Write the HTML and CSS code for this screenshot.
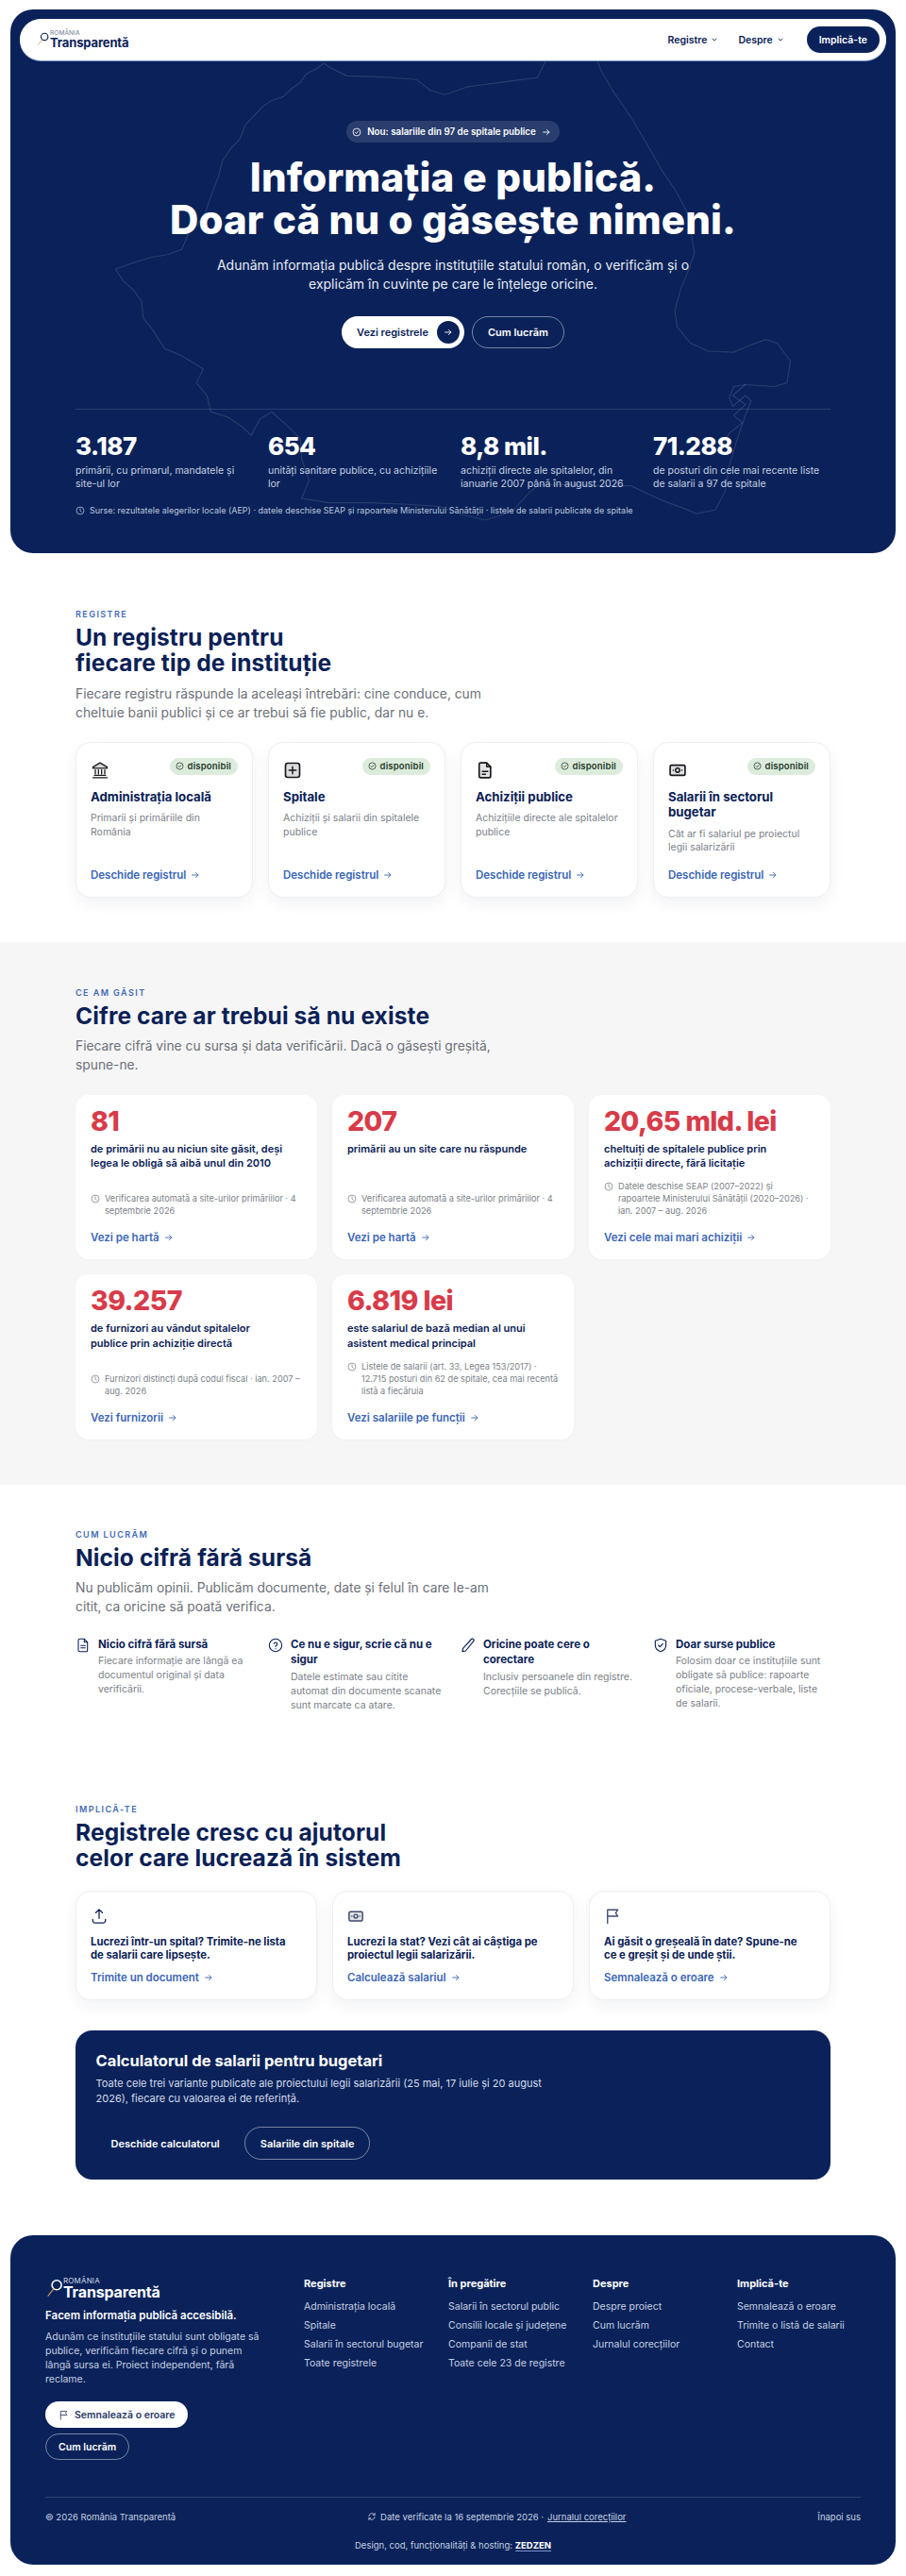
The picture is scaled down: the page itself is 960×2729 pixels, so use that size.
FILE: index.html
```html
<!DOCTYPE html>
<html lang="ro">
<head>
<meta charset="utf-8">
<title>România Transparentă</title>
<link rel="stylesheet" href="styles.css">
</head>
<body>
<svg class="defs" width="0" height="0" aria-hidden="true">
  <symbol id="i-check" viewBox="0 0 24 24"><circle cx="12" cy="12" r="9.5" fill="none" stroke="currentColor" stroke-width="2"/><path d="M8 12.5l2.8 2.8L16 9.5" fill="none" stroke="currentColor" stroke-width="2" stroke-linecap="round" stroke-linejoin="round"/></symbol>
  <symbol id="i-arrow" viewBox="0 0 24 24"><path d="M4 12h15M13 6l6 6-6 6" fill="none" stroke="currentColor" stroke-width="2.2" stroke-linecap="round" stroke-linejoin="round"/></symbol>
  <symbol id="i-chev" viewBox="0 0 24 24"><path d="M6 9l6 6 6-6" fill="none" stroke="currentColor" stroke-width="2.6" stroke-linecap="round" stroke-linejoin="round"/></symbol>
  <symbol id="i-clock" viewBox="0 0 24 24"><circle cx="12" cy="12" r="9.5" fill="none" stroke="currentColor" stroke-width="1.8"/><path d="M12 6.5V12l3 3.5" fill="none" stroke="currentColor" stroke-width="1.8" stroke-linecap="round" stroke-linejoin="round"/></symbol>
  <symbol id="i-bank" viewBox="0 0 24 24"><path d="M12 2.5L21 8v1.5H3V8z" fill="#d9d9dc" stroke="currentColor" stroke-width="1.6" stroke-linejoin="round"/><path d="M3 21.5h18M5 18.5h14M6 11.5v5M10 11.5v5M14 11.5v5M18 11.5v5" fill="none" stroke="currentColor" stroke-width="1.6" stroke-linecap="round"/></symbol>
  <symbol id="i-plus" viewBox="0 0 24 24"><rect x="3" y="3" width="18" height="18" rx="3" fill="#dcdcdf" stroke="currentColor" stroke-width="2"/><path d="M12 7.5v9M7.5 12h9" fill="none" stroke="currentColor" stroke-width="1.8" stroke-linecap="round"/></symbol>
  <symbol id="i-doc" viewBox="0 0 24 24"><path d="M6.5 2.5H14l5 5v12a2 2 0 0 1-2 2H6.500a2 2 0 0 1-2-2v-15a2 2 0 0 1 2-2z" fill="#e2e2e4" stroke="currentColor" stroke-width="2" stroke-linejoin="round"/><path d="M14 2.500v5h5M8.500 13.500h7M8.500 17h4" fill="none" stroke="currentColor" stroke-width="1.700" stroke-linecap="round" stroke-linejoin="round"/></symbol>
  <symbol id="i-cash" viewBox="0 0 24 24"><rect x="2.500" y="5.500" width="19" height="13" rx="2" fill="#e2e2e4" stroke="currentColor" stroke-width="2"/><circle cx="12" cy="12" r="2.600" fill="none" stroke="currentColor" stroke-width="1.800"/><path d="M6.500 12h.01M17.500 12h.01" stroke="currentColor" stroke-width="2" stroke-linecap="round"/></symbol>
  <symbol id="i-file" viewBox="0 0 24 24"><path d="M6.500 2H14l5 5v13a2 2 0 0 1-2 2H6.500a2 2 0 0 1-2-2V4a2 2 0 0 1 2-2z" fill="none" stroke="currentColor" stroke-width="1.600" stroke-linejoin="round"/><path d="M14 2v5h5M8.500 12.500h7M8.500 16h7" fill="none" stroke="currentColor" stroke-width="1.600" stroke-linecap="round" stroke-linejoin="round"/></symbol>
  <symbol id="i-help" viewBox="0 0 24 24"><circle cx="12" cy="12" r="10" fill="none" stroke="currentColor" stroke-width="1.600"/><path d="M9.300 9.300a2.800 2.800 0 0 1 5.400.8c0 1.900-2.700 2.300-2.700 4M12 17.500h.01" fill="none" stroke="currentColor" stroke-width="1.800" stroke-linecap="round" stroke-linejoin="round"/></symbol>
  <symbol id="i-pen" viewBox="0 0 24 24"><path d="M16.500 3a2.400 2.400 0 0 1 4.500 2.200L8 21l-5 1 .800-5z" fill="none" stroke="currentColor" stroke-width="1.700" stroke-linejoin="round"/></symbol>
  <symbol id="i-shield" viewBox="0 0 24 24"><path d="M12 2l8.500 3v7c0 5-3.700 8.400-8.500 10-4.800-1.600-8.500-5-8.500-10V5z" fill="none" stroke="currentColor" stroke-width="1.700" stroke-linejoin="round"/><path d="M8.500 12l2.500 2.500 4.500-5" fill="none" stroke="currentColor" stroke-width="1.700" stroke-linecap="round" stroke-linejoin="round"/></symbol>
  <symbol id="i-upload" viewBox="0 0 24 24"><path d="M12 15V2.500M7.500 7L12 2.500 16.500 7M3 16.500v1.500a3.500 3.500 0 0 0 3.500 3.500h11a3.500 3.500 0 0 0 3.500-3.500v-1.500" fill="none" stroke="currentColor" stroke-width="1.700" stroke-linecap="round" stroke-linejoin="round"/></symbol>
  <symbol id="i-flag" viewBox="0 0 24 24"><path d="M5 22V3h14.500l-3 4.500 3 4.500H5" fill="none" stroke="currentColor" stroke-width="1.800" stroke-linecap="round" stroke-linejoin="round"/></symbol>
  <symbol id="i-sync" viewBox="0 0 24 24"><path d="M4.500 11A7.800 7.800 0 0 1 18 6.500l1.500 1.500M19.500 13A7.800 7.800 0 0 1 6 17.500L4.500 16M19.500 3.500V8H15M4.500 20.500V16H9" fill="none" stroke="currentColor" stroke-width="2" stroke-linecap="round" stroke-linejoin="round"/></symbol>
  <symbol id="i-lens" viewBox="0 0 24 24"><circle cx="14" cy="8.500" r="6.300" fill="none" stroke="currentColor" stroke-width="2"/><path d="M10 13.500L2.500 23" fill="none" stroke="#d79a5e" stroke-width="1.400" stroke-linecap="round"/></symbol>
</svg>

<header class="hero">
  <svg class="hero-map" viewBox="0 0 1568 1568" preserveAspectRatio="none" aria-hidden="true">
    <path vector-effect="non-scaling-stroke" d="M560 175L548 190L530 205L520 228L505 245L490 268L470 278L455 295L440 320L425 345L415 385L400 410L385 445L378 490L368 530L355 590L340 625L325 650L315 690L290 705L262 712L235 725L200 745L212 775L232 805L245 835L248 880L265 915L285 965L315 985L352 1022L340 1060L358 1095L365 1140L395 1155L418 1180L435 1205L450 1160L470 1140L505 1190L520 1215L522 1270L535 1330L522 1380L570 1392L640 1392L705 1396L760 1402L800 1425L840 1440L870 1425L890 1410L915 1365L932 1342L985 1342L1040 1345L1092 1345L1125 1370L1150 1388L1180 1405L1205 1422L1238 1412L1255 1360L1262 1290L1275 1220L1290 1150L1300 1110L1290 1095L1268 1125L1262 1100L1270 1070L1290 1065L1340 1070L1362 1060L1368 1000L1345 950L1325 940L1295 958L1270 975L1225 972L1195 950L1172 905L1168 860L1178 800L1190 755L1202 700L1195 635L1190 590L1170 530L1145 470L1120 400L1090 320L1060 250L1040 195L1030 150L950 150L930 215L880 225L810 240L770 262L745 250L720 220L680 215L640 212L600 210L575 190Z"/>
    <path vector-effect="non-scaling-stroke" d="M1290 1065L1268 1095L1290 1120L1270 1150L1285 1170L1262 1200L1248 1240"/>
  </svg>
  <nav class="nav">
    <a class="logo">
      <svg class="logo-lens"><use href="#i-lens"/></svg>
      <span class="logo-text"><small>ROMÂNIA</small><b>Transparentă</b></span>
    </a>
    <div class="nav-links">
      <a>Registre <svg class="ic-7"><use href="#i-chev"/></svg></a>
      <a>Despre <svg class="ic-7"><use href="#i-chev"/></svg></a>
      <a class="nav-cta">Implică-te</a>
    </div>
  </nav>
  <div class="hero-inner">
    <a class="hero-pill"><svg class="ic-10"><use href="#i-check"/></svg>Nou: salariile din 97 de spitale publice<svg class="ic-10"><use href="#i-arrow"/></svg></a>
    <h1>Informația e publică.<br>Doar că nu o găsește nimeni.</h1>
    <p class="hero-lead">Adunăm informația publică despre instituțiile statului român, o verificăm și o explicăm în cuvinte pe care le înțelege oricine.</p>
    <div class="hero-btns">
      <a class="btn btn-white">Vezi registrele<span class="btn-dot"><svg class="ic-10"><use href="#i-arrow"/></svg></span></a>
      <a class="btn btn-ghost">Cum lucrăm</a>
    </div>
    <div class="stats">
      <div class="stat"><strong>3.187</strong><span>primării, cu primarul, mandatele și site-ul lor</span></div>
      <div class="stat"><strong>654</strong><span>unități sanitare publice, cu achizițiile lor</span></div>
      <div class="stat"><strong>8,8 mil.</strong><span>achiziții directe ale spitalelor, din ianuarie 2007 până în august 2026</span></div>
      <div class="stat"><strong>71.288</strong><span>de posturi din cele mai recente liste de salarii a 97 de spitale</span></div>
    </div>
    <p class="hero-src"><svg class="ic-10"><use href="#i-clock"/></svg>Surse: rezultatele alegerilor locale (AEP) · datele deschise SEAP și rapoartele Ministerului Sănătății · listele de salarii publicate de spitale</p>
  </div>
</header>

<main>
  <section class="sec sec-reg">
    <p class="eyebrow">REGISTRE</p>
    <h2>Un registru pentru<br>fiecare tip de instituție</h2>
    <p class="lead">Fiecare registru răspunde la aceleași întrebări: cine conduce, cum cheltuie banii publici și ce ar trebui să fie public, dar nu e.</p>
    <div class="grid-4">
      <article class="reg-card">
        <div class="reg-top"><svg class="ic-20"><use href="#i-bank"/></svg><span class="badge"><svg class="ic-9"><use href="#i-check"/></svg>disponibil</span></div>
        <h3>Administrația locală</h3>
        <p>Primarii și primăriile din România</p>
        <a class="link">Deschide registrul <svg class="ic-10"><use href="#i-arrow"/></svg></a>
      </article>
      <article class="reg-card">
        <div class="reg-top"><svg class="ic-20"><use href="#i-plus"/></svg><span class="badge"><svg class="ic-9"><use href="#i-check"/></svg>disponibil</span></div>
        <h3>Spitale</h3>
        <p>Achiziții și salarii din spitalele publice</p>
        <a class="link">Deschide registrul <svg class="ic-10"><use href="#i-arrow"/></svg></a>
      </article>
      <article class="reg-card">
        <div class="reg-top"><svg class="ic-20"><use href="#i-doc"/></svg><span class="badge"><svg class="ic-9"><use href="#i-check"/></svg>disponibil</span></div>
        <h3>Achiziții publice</h3>
        <p>Achizițiile directe ale spitalelor publice</p>
        <a class="link">Deschide registrul <svg class="ic-10"><use href="#i-arrow"/></svg></a>
      </article>
      <article class="reg-card">
        <div class="reg-top"><svg class="ic-20"><use href="#i-cash"/></svg><span class="badge"><svg class="ic-9"><use href="#i-check"/></svg>disponibil</span></div>
        <h3>Salarii în sectorul bugetar</h3>
        <p>Cât ar fi salariul pe proiectul legii salarizării</p>
        <a class="link">Deschide registrul <svg class="ic-10"><use href="#i-arrow"/></svg></a>
      </article>
    </div>
  </section>

  <section class="sec sec-gray">
    <p class="eyebrow">CE AM GĂSIT</p>
    <h2>Cifre care ar trebui să nu existe</h2>
    <p class="lead">Fiecare cifră vine cu sursa și data verificării. Dacă o găsești greșită, spune-ne.</p>
    <div class="grid-3 fact-grid">
      <article class="fact">
        <strong>81</strong>
        <h3>de primării nu au niciun site găsit, deși legea le obligă să aibă unul din 2010</h3>
        <p class="src"><svg class="ic-10"><use href="#i-clock"/></svg><span>Verificarea automată a site-urilor primăriilor · 4 septembrie 2026</span></p>
        <a class="link">Vezi pe hartă <svg class="ic-10"><use href="#i-arrow"/></svg></a>
      </article>
      <article class="fact">
        <strong>207</strong>
        <h3>primării au un site care nu răspunde</h3>
        <p class="src"><svg class="ic-10"><use href="#i-clock"/></svg><span>Verificarea automată a site-urilor primăriilor · 4 septembrie 2026</span></p>
        <a class="link">Vezi pe hartă <svg class="ic-10"><use href="#i-arrow"/></svg></a>
      </article>
      <article class="fact">
        <strong>20,65 mld. lei</strong>
        <h3>cheltuiți de spitalele publice prin<br>achiziții directe, fără licitație</h3>
        <p class="src"><svg class="ic-10"><use href="#i-clock"/></svg><span>Datele deschise SEAP (2007–2022) și rapoartele Ministerului Sănătății (2020–2026) · ian. 2007 – aug. 2026</span></p>
        <a class="link">Vezi cele mai mari achiziții <svg class="ic-10"><use href="#i-arrow"/></svg></a>
      </article>
      <article class="fact">
        <strong>39.257</strong>
        <h3>de furnizori au vândut spitalelor<br>publice prin achiziție directă</h3>
        <p class="src"><svg class="ic-10"><use href="#i-clock"/></svg><span>Furnizori distincți după codul fiscal · ian. 2007 – aug. 2026</span></p>
        <a class="link">Vezi furnizorii <svg class="ic-10"><use href="#i-arrow"/></svg></a>
      </article>
      <article class="fact">
        <strong>6.819 lei</strong>
        <h3>este salariul de bază median al unui asistent medical principal</h3>
        <p class="src"><svg class="ic-10"><use href="#i-clock"/></svg><span>Listele de salarii (art. 33, Legea 153/2017) · 12.715 posturi din 62 de spitale, cea mai recentă listă a fiecăruia</span></p>
        <a class="link">Vezi salariile pe funcții <svg class="ic-10"><use href="#i-arrow"/></svg></a>
      </article>
    </div>
  </section>

  <section class="sec sec-how">
    <p class="eyebrow">CUM LUCRĂM</p>
    <h2>Nicio cifră fără sursă</h2>
    <p class="lead">Nu publicăm opinii. Publicăm documente, date și felul în care le-am citit, ca oricine să poată verifica.</p>
    <div class="grid-4">
      <div class="how"><svg class="ic-16"><use href="#i-file"/></svg><div><h3>Nicio cifră fără sursă</h3><p>Fiecare informație are lângă ea documentul original și data verificării.</p></div></div>
      <div class="how"><svg class="ic-16"><use href="#i-help"/></svg><div><h3>Ce nu e sigur, scrie că nu e sigur</h3><p>Datele estimate sau citite automat din documente scanate sunt marcate ca atare.</p></div></div>
      <div class="how"><svg class="ic-16"><use href="#i-pen"/></svg><div><h3>Oricine poate cere o corectare</h3><p>Inclusiv persoanele din registre. Corecțiile se publică.</p></div></div>
      <div class="how"><svg class="ic-16"><use href="#i-shield"/></svg><div><h3>Doar surse publice</h3><p>Folosim doar ce instituțiile sunt obligate să publice: rapoarte oficiale, procese-verbale, liste de salarii.</p></div></div>
    </div>
  </section>

  <section class="sec sec-join">
    <p class="eyebrow">IMPLICĂ-TE</p>
    <h2>Registrele cresc cu ajutorul<br>celor care lucrează în sistem</h2>
    <div class="grid-3 join-grid">
      <article class="join"><svg class="ic-18"><use href="#i-upload"/></svg><h3>Lucrezi într-un spital? Trimite-ne lista<br>de salarii care lipsește.</h3><a class="link">Trimite un document <svg class="ic-10"><use href="#i-arrow"/></svg></a></article>
      <article class="join"><svg class="ic-18 muted"><use href="#i-cash"/></svg><h3>Lucrezi la stat? Vezi cât ai câștiga pe<br>proiectul legii salarizării.</h3><a class="link">Calculează salariul <svg class="ic-10"><use href="#i-arrow"/></svg></a></article>
      <article class="join"><svg class="ic-18 muted"><use href="#i-flag"/></svg><h3>Ai găsit o greșeală în date? Spune-ne<br>ce e greșit și de unde știi.</h3><a class="link">Semnalează o eroare <svg class="ic-10"><use href="#i-arrow"/></svg></a></article>
    </div>
    <div class="calc">
      <h3>Calculatorul de salarii pentru bugetari</h3>
      <p>Toate cele trei variante publicate ale proiectului legii salarizării (25 mai, 17 iulie și 20 august 2026), fiecare cu valoarea ei de referință.</p>
      <div class="calc-btns">
        <a class="btn btn-plain">Deschide calculatorul</a>
        <a class="btn btn-ghost">Salariile din spitale</a>
      </div>
    </div>
  </section>
</main>

<footer class="footer">
  <div class="foot-grid">
    <div class="foot-brand">
      <a class="logo logo-lg">
        <svg class="logo-lens"><use href="#i-lens"/></svg>
        <span class="logo-text"><small>ROMÂNIA</small><b>Transparentă</b></span>
      </a>
      <p class="foot-tag">Facem informația publică accesibilă.</p>
      <p class="foot-text">Adunăm ce instituțiile statului sunt obligate să publice, verificăm fiecare cifră și o punem lângă sursa ei. Proiect independent, fără reclame.</p>
      <div class="foot-btns">
        <a class="btn btn-white btn-sm"><svg class="ic-11"><use href="#i-flag"/></svg>Semnalează o eroare</a>
        <a class="btn btn-ghost btn-sm">Cum lucrăm</a>
      </div>
    </div>
    <div class="foot-col"><h4>Registre</h4><a>Administrația locală</a><a>Spitale</a><a>Salarii în sectorul bugetar</a><a>Toate registrele</a></div>
    <div class="foot-col"><h4>În pregătire</h4><a>Salarii în sectorul public</a><a>Consilii locale și județene</a><a>Companii de stat</a><a>Toate cele 23 de registre</a></div>
    <div class="foot-col"><h4>Despre</h4><a>Despre proiect</a><a>Cum lucrăm</a><a>Jurnalul corecțiilor</a></div>
    <div class="foot-col"><h4>Implică-te</h4><a>Semnalează o eroare</a><a>Trimite o listă de salarii</a><a>Contact</a></div>
  </div>
  <div class="foot-bottom">
    <span>© 2026 România Transparentă</span>
    <span class="foot-ver"><svg class="ic-10"><use href="#i-sync"/></svg>Date verificate la 16 septembrie 2026 · <u>Jurnalul corecțiilor</u></span>
    <span>Înapoi sus</span>
  </div>
  <p class="foot-credit">Design, cod, funcționalități &amp; hosting: <b>ZEDZEN</b></p>
</footer>
</body>
</html>
```

FILE: styles.css
```css
* { box-sizing: border-box; }
html, body { margin: 0; padding: 0; }
body { font-family: Inter, "Noto Sans", sans-serif; background: #fff; color: #0a2156; }
h1, h2, h3, h4, p { margin: 0; }
a { color: inherit; text-decoration: none; }
svg { display: block; flex: none; }
.defs { position: absolute; }
.ic-7 { width: 8px; height: 8px; }
.ic-9 { width: 9px; height: 9px; }
.ic-10 { width: 10px; height: 10px; }
.ic-11 { width: 11px; height: 11px; }
.ic-16 { width: 16px; height: 18px; color: #0a2156; }
.ic-18 { width: 18px; height: 20px; color: #0a2156; }
.ic-20 { width: 20px; height: 20px; color: #16181d; }
.muted { color: #3c4a70; }

/* hero */
.hero { position: relative; margin: 10px 11px 0; height: 576px; background: #0a2259; border-radius: 24px; overflow: hidden; }
.hero-map { position: absolute; left: -11px; top: -10px; width: 960px; height: 600px; fill: none; stroke: rgba(255,255,255,.13); stroke-width: 1.1; }
.nav { position: relative; display: flex; justify-content: space-between; align-items: center; height: 44px; margin: 10px 10px 0 10px; padding: 0 7px 0 18px; background: #fff; border-radius: 22px; box-shadow: 0 1px 0 #7f9ad0; }
.logo { display: flex; align-items: flex-start; color: #0a2156; }
.logo-lens { width: 14px; height: 14px; margin-top: 2px; }
.logo-text { display: flex; flex-direction: column; }
.logo-text small { font-size: 6.5px; line-height: 7px; color: #6b7894; letter-spacing: .02em; }
.logo-text b { font-size: 13px; line-height: 13px; font-weight: 700; letter-spacing: -.01em; }
.nav-links { display: flex; align-items: center; gap: 21px; font-size: 10.500px; font-weight: 600; color: #0a2156; }
.nav-links a { display: flex; align-items: center; gap: 4px; }
.nav-cta { height: 28px; padding: 0 13px; margin-left: 3px; border-radius: 14px; background: #0a2259; color: #fff; }

.hero-inner { position: relative; padding: 64px 69px 0; display: flex; flex-direction: column; align-items: center; color: #fff; }
.hero-pill { display: flex; align-items: center; gap: 6px; height: 23px; padding: 0 9px 0 6px; border-radius: 12px; background: rgba(255,255,255,.13); font-size: 9.800px; font-weight: 600; }
h1 { margin-top: 13.500px; font-size: 42px; line-height: 45px; font-weight: 800; letter-spacing: .003em; text-align: center; }
.hero-lead { margin-top: 16px; width: 520px; font-size: 14px; line-height: 20.500px; text-align: center; color: #e8ecf5; }
.hero-btns { display: flex; gap: 8px; margin-top: 23px; }
.btn { display: inline-flex; align-items: center; height: 34.500px; padding: 0 16px; border-radius: 18px; font-size: 11px; font-weight: 600; }
.btn-white { background: #fff; color: #0a2156; gap: 9px; padding-right: 5px; }
.btn-ghost { border: 1px solid rgba(255,255,255,.45); color: #fff; }
.btn-plain { color: #fff; }
.btn-dot { display: flex; align-items: center; justify-content: center; width: 24px; height: 24px; border-radius: 50%; background: #0a2259; color: #fff; }
.stats { align-self: stretch; display: grid; grid-template-columns: repeat(4, 1fr); gap: 16px; margin-top: 64px; padding-top: 25px; border-top: 1px solid rgba(255,255,255,.13); }
.stat strong { display: block; font-size: 26px; line-height: 28px; font-weight: 800; letter-spacing: -.02em; }
.stat span { display: block; margin-top: 5px; font-size: 10.500px; line-height: 14px; color: #c7d0e2; }
.hero-src { align-self: stretch; display: flex; align-items: center; gap: 5px; margin-top: 15px; font-size: 9px; line-height: 12px; color: #bcc6db; }

/* sections */
.sec { padding: 48px 80px; }
.sec-reg { padding-top: 59px; padding-bottom: 47px; }
.sec-gray { background: #f6f6f7; padding-bottom: 48px; }
.sec-how { padding-top: 47px; padding-bottom: 48px; }
.sec-join { padding-top: 49px; padding-bottom: 0; }
.eyebrow { font-size: 9px; line-height: 12px; font-weight: 600; letter-spacing: .16em; color: #3f69b5; }
h2 { margin-top: 5px; font-size: 24.500px; line-height: 27px; font-weight: 700; letter-spacing: .005em; color: #0a2156; }
.lead { margin-top: 8.500px; max-width: 448px; font-size: 13.800px; line-height: 20px; color: #6c7078; }
.grid-4 { display: grid; grid-template-columns: repeat(4, 1fr); gap: 16px; margin-top: 21.500px; }
.grid-3 { display: grid; grid-template-columns: repeat(3, 1fr); gap: 16px; margin-top: 21.500px; }

.link { display: flex; align-items: center; gap: 5px; font-size: 11.500px; line-height: 14px; font-weight: 600; color: #3b66b6; }

/* registry cards */
.reg-card { display: flex; flex-direction: column; min-height: 164.500px; padding: 15.500px 15px 16px; background: #fff; border: 1px solid #eeeff1; border-radius: 16px; box-shadow: 0 6px 16px rgba(10,33,86,.06); }
.reg-top { display: flex; justify-content: space-between; align-items: flex-start; height: 33px; }
.reg-top .ic-20 { margin-top: 3px; }
.badge { display: inline-flex; align-items: center; gap: 4px; height: 18px; padding: 0 7px 0 6px; border-radius: 9px; background: #dcebdc; font-size: 9.500px; font-weight: 600; letter-spacing: .02em; color: #1f3a2a; }
.reg-card h3 { font-size: 13.200px; line-height: 16.500px; font-weight: 700; color: #0a2156; }
.reg-card p { margin-top: 8px; font-size: 10.500px; line-height: 14.700px; color: #7a7f88; }
.reg-card .link { margin-top: auto; padding-top: 12px; }

/* facts */
.fact-grid { grid-auto-rows: 174.500px; }
.fact { display: flex; flex-direction: column; padding: 16px; background: #fff; border-radius: 14px; box-shadow: 0 1px 3px rgba(10,33,86,.03); }
.fact strong { font-size: 28.500px; line-height: 24px; font-weight: 800; letter-spacing: -.02em; color: #d83b49; }
.fact h3 { margin-top: 10px; font-size: 11px; line-height: 15.500px; font-weight: 600; color: #0a2156; }
.src { display: flex; gap: 5px; margin-top: auto; font-size: 9.200px; line-height: 13px; color: #7a7f88; }
.src svg { margin-top: 2px; }
.fact .link { margin-top: 15px; }

/* how */
.how { display: flex; gap: 8px; padding-right: 4px; }
.how h3 { font-size: 11.500px; line-height: 16.600px; font-weight: 700; color: #0a2156; }
.how p { margin-top: 2px; font-size: 10.500px; line-height: 15px; color: #7a7f88; }

/* join */
.join-grid { margin-top: 21px; }
.join { display: flex; flex-direction: column; height: 116px; padding: 16px 15px; background: #fff; border: 1px solid #eeeff1; border-radius: 16px; box-shadow: 0 6px 16px rgba(10,33,86,.06); }
.join h3 { margin-top: 10px; font-size: 11.300px; line-height: 14px; font-weight: 700; color: #0a2156; }
.join .link { margin-top: 10px; }
.calc { margin-top: 32px; height: 158.600px; padding: 22.700px 21.600px 0; background: #0a2259; border-radius: 18px; color: #fff; }
.calc h3 { font-size: 16.500px; line-height: 20px; font-weight: 700; }
.calc p { margin-top: 6px; max-width: 485px; font-size: 11px; line-height: 16px; color: #d7dded; }
.calc-btns { display: flex; gap: 0; margin-top: 22px; }
.calc-btns .btn-plain { margin-right: 10px; }

/* footer */
.footer { margin: 59px 11px 11px; height: 349px; padding: 44px 37px 0; background: #0a2259; border-radius: 24px; color: #fff; }
.foot-grid { display: grid; grid-template-columns: 252px repeat(4, 1fr); gap: 22px; height: 233px; }
.logo-lg { color: #fff; margin-left: 1px; }
.logo-lg .logo-lens { width: 19px; height: 19px; margin-top: 2px; margin-right: -1px; }
.logo-lg .logo-text small { font-size: 8px; line-height: 9px; color: #cfd6e6; }
.logo-lg .logo-text b { font-size: 16px; line-height: 15px; }
.foot-tag { margin-top: 10px; font-size: 11.500px; line-height: 14px; font-weight: 600; }
.foot-text { margin-top: 8px; max-width: 230px; font-size: 10.500px; line-height: 15px; color: #c7d0e2; }
.foot-btns { display: flex; flex-direction: column; align-items: flex-start; gap: 6px; margin-top: 16px; }
.btn-sm { height: 28px; padding: 0 13px; gap: 6px; font-size: 10.500px; }
.btn-sm.btn-white { padding-right: 13px; padding-left: 14px; color: #2a3a66; }
.foot-col { display: flex; flex-direction: column; }
.foot-col h4 { font-size: 11px; line-height: 14px; font-weight: 700; margin-bottom: 8px; }
.foot-col a { font-size: 10.500px; line-height: 20px; color: #c7d0e2; }
.foot-bottom { display: flex; justify-content: space-between; align-items: center; height: 41px; border-top: 1px solid rgba(255,255,255,.16); font-size: 9.500px; color: #c7d0e2; }
.foot-ver { display: flex; align-items: center; gap: 4px; }
.foot-credit { margin-top: 0; padding-top: 5px; text-align: center; font-size: 9.500px; line-height: 12px; color: #c7d0e2; }
.foot-credit b { color: #fff; border-bottom: 1px solid #7f9ad0; font-weight: 700; }
```
